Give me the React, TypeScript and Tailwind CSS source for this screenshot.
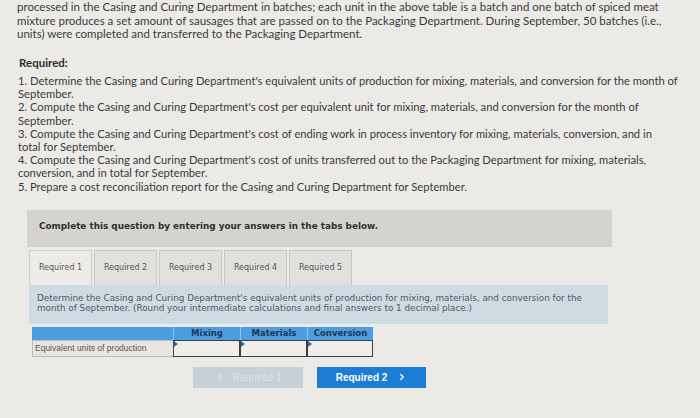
import { ChevronLeft, ChevronRight } from 'lucide-react'

const intro = [
  'processed in the Casing and Curing Department in batches; each unit in the above table is a batch and one batch of spiced meat',
  'mixture produces a set amount of sausages that are passed on to the Packaging Department. During September, 50 batches (i.e.,',
  'units) were completed and transferred to the Packaging Department.',
]

const required = [
  [
    "1. Determine the Casing and Curing Department's equivalent units of production for mixing, materials, and conversion for the month of",
    'September.',
  ],
  [
    "2. Compute the Casing and Curing Department's cost per equivalent unit for mixing, materials, and conversion for the month of",
    'September.',
  ],
  [
    "3. Compute the Casing and Curing Department's cost of ending work in process inventory for mixing, materials, conversion, and in",
    'total for September.',
  ],
  [
    "4. Compute the Casing and Curing Department's cost of units transferred out to the Packaging Department for mixing, materials,",
    'conversion, and in total for September.',
  ],
  ['5. Prepare a cost reconciliation report for the Casing and Curing Department for September.'],
]

const tabs = ['Required 1', 'Required 2', 'Required 3', 'Required 4', 'Required 5']

// answer cell with the little marker in the corner
function InputCell() {
  return (
    <div className="relative h-full border border-[#3d3d3d] bg-[#efeeeb]">
      <span className="absolute left-0 top-0 h-0 w-0 border-l-[4px] border-t-[3px] border-b-[3px] border-l-[#2f6fb0] border-t-transparent border-b-transparent" />
    </div>
  )
}

export default function App() {
  return (
    <div className="relative h-[418px] w-[700px] overflow-hidden bg-[#ebeae6] font-['Lato','Liberation_Sans',sans-serif] text-[#3a3a3a]">
      {/* problem text */}
      <div className="pl-[17px] text-[11.5px] leading-[13.5px]">
        {intro.map((line) => (
          <div key={line} className="whitespace-nowrap">
            {line}
          </div>
        ))}
      </div>

      <div className="mt-[15px] pl-[19px] text-[11.5px] font-bold leading-[13.5px] text-[#2e2e2e]">Required:</div>
      <div className="mt-[5px] pl-[18px] text-[11.2px] leading-[13.2px]">
        {required.map((item) => (
          <div key={item[0]}>
            {item.map((line) => (
              <div key={line} className="whitespace-nowrap">
                {line}
              </div>
            ))}
          </div>
        ))}
      </div>

      {/* answer area */}
      <div className="ml-[27px] mt-[17px] h-[37px] w-[585px] bg-[#d4d3ce] pl-[12px] pt-[10px] font-['DejaVu_Sans',sans-serif] text-[8.85px] font-bold leading-[12px] text-[#2f2f2f]">
        Complete this question by entering your answers in the tabs below.
      </div>

      <div className="ml-[29px] mt-[3px] flex gap-[2px]">
        {tabs.map((t, i) => (
          <div
            key={t}
            className={`flex h-[35px] w-[63px] items-center justify-center border border-b-0 font-['DejaVu_Sans',sans-serif] text-[8px] text-[#555] ${
              i === 0 ? 'border-[#cfcecb] bg-[#ecebe7]' : 'border-[#c9c8c4] bg-[#e1e0dc]'
            }`}
          >
            {t}
          </div>
        ))}
      </div>

      <div className="ml-[29px] h-[39px] w-[579px] bg-[#cddbe3] pl-[8px] pt-[8px] font-['DejaVu_Sans',sans-serif] text-[8.8px] leading-[10.5px] text-[#4d5a63]">
        <div className="whitespace-nowrap">
          Determine the Casing and Curing Department's equivalent units of production for mixing, materials, and conversion for the
        </div>
        <div className="whitespace-nowrap">
          month of September. (Round your intermediate calculations and final answers to 1 decimal place.)
        </div>
      </div>

      <div className="ml-[32px] mt-[3px] w-[341px]">
        <div className="grid h-[13px] grid-cols-[141px_67px_67px_66px] bg-[#4d9de2] font-['DejaVu_Sans',sans-serif] text-[8.5px] font-bold leading-[13px] text-[#21384f]">
          <div />
          <div className="border-l border-[#8fc1ec] text-center">Mixing</div>
          <div className="border-l border-[#8fc1ec] text-center">Materials</div>
          <div className="border-l border-[#8fc1ec] text-center">Conversion</div>
        </div>
        <div className="grid h-[17px] grid-cols-[141px_67px_67px_66px]">
          <div className="border border-r-0 border-[#bdbcb8] bg-[#e6e5e1] pl-[2px] font-['Liberation_Sans',sans-serif] text-[8.5px] leading-[15px] text-[#555]">
            Equivalent units of production
          </div>
          <InputCell />
          <InputCell />
          <InputCell />
        </div>
      </div>

      {/* navigation */}
      <div className="ml-[193px] mt-[10px] flex gap-[14px] font-['Liberation_Sans',sans-serif] text-[10px] font-bold">
        <div className="flex h-[21px] w-[110px] items-center justify-center gap-[8px] bg-[#c6d0d6] text-[#dde5ea]">
          <ChevronLeft size={10} strokeWidth={3} />
          <span className="font-normal">Required 1</span>
        </div>
        <div className="flex h-[21px] w-[109px] items-center justify-center gap-[10px] bg-[#1b7dd4] text-white">
          <span>Required 2</span>
          <ChevronRight size={10} strokeWidth={3} />
        </div>
      </div>
    </div>
  )
}
